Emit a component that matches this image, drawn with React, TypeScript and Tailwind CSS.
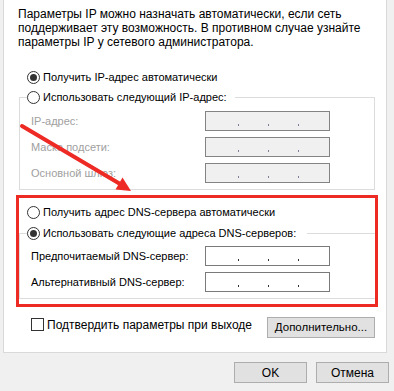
import React from "react";

function Radio({ checked }: { checked?: boolean }) {
  return (
    <span className="w-[13px] h-[13px] rounded-full border border-[#333333] bg-white flex items-center justify-center shrink-0">
      {checked ? <span className="w-[7px] h-[7px] rounded-full bg-[#333333]" /> : null}
    </span>
  );
}

function IpBox({ disabled }: { disabled?: boolean }) {
  const dot = disabled ? "bg-[#7d7d95]" : "bg-[#333333]";
  return (
    <div
      className={`w-[125px] h-[20px] border flex items-end pb-[4px] pl-[32px] ${
        disabled ? "bg-[#f0f0f0] border-[#838383]" : "bg-white border-[#7a7a7a]"
      }`}
    >
      <span className={`w-px h-[2px] ${dot}`} />
      <span className={`w-px h-[2px] ml-[29px] ${dot}`} />
      <span className={`w-px h-[2px] ml-[29px] ${dot}`} />
    </div>
  );
}

function FieldRow({ label, disabled }: { label: string; disabled?: boolean }) {
  return (
    <div className="flex items-center pl-[11px]">
      <span className={`w-[174px] leading-[20px] text-[11px] ${disabled ? "text-[#a0a0a0]" : "text-black"}`}>
        {label}
      </span>
      <IpBox disabled={disabled} />
    </div>
  );
}

export default function App() {
  return (
    <div
      className="w-[394px] h-[391px] bg-[#f0f0f0] relative overflow-hidden text-[12px] text-black"
      style={{ fontFamily: '"Segoe UI", "Liberation Sans", Arial, sans-serif' }}
    >
      <div className="ml-[3px] w-[384px] h-[353px] bg-white border-x border-b border-[#d9d9d9] pl-[15px] pr-[11px]">
        <p className="pt-[7px] -ml-px leading-[14px]">
          Параметры IP можно назначать автоматически, если сеть
          <br />
          поддерживает эту возможность. В противном случае узнайте
          <br />
          параметры IP у сетевого администратора.
        </p>

        <div className="mt-[20px] ml-[8px] h-[16px] flex items-center">
          <Radio checked />
          <span className="ml-[3px] text-[11px]">Получить IP-адрес автоматически</span>
        </div>

        <fieldset className="mt-[4px] border border-[#dcdcdc] pb-[6px]">
          <legend className="ml-[7px] pr-[8px] h-[16px] flex items-center">
            <Radio />
            <span className="ml-[3px] text-[11px]">Использовать следующий IP-адрес:</span>
          </legend>
          <div className="mt-[6px] flex flex-col gap-[6px]">
            <FieldRow label="IP-адрес:" disabled />
            <FieldRow label="Маска подсети:" disabled />
            <FieldRow label="Основной шлюз:" disabled />
          </div>
        </fieldset>

        <div className="mt-[5px] -mx-[3px] border-[3px] border-[#ee2a24] pt-[6px] pb-[5px]">
          <div className="ml-[8px] h-[16px] flex items-center">
            <Radio />
            <span className="ml-[3px] text-[11px]">Получить адрес DNS-сервера автоматически</span>
          </div>
          <fieldset className="mt-[5px] border border-r-0 border-[#dcdcdc] pb-[6px]">
            <legend className="ml-[7px] pr-[11px] h-[16px] flex items-center">
              <Radio checked />
              <span className="ml-[3px] text-[11px]">Использовать следующие адреса DNS-серверов:</span>
            </legend>
            <div className="mt-[5px] flex flex-col gap-[6px]">
              <FieldRow label="Предпочитаемый DNS-сервер:" />
              <FieldRow label="Альтернативный DNS-сервер:" />
            </div>
          </fieldset>
        </div>

        <div className="mt-[10px] flex items-start justify-between">
          <div className="ml-[12px] mt-[1px] flex items-center h-[13px]">
            <span className="w-[13px] h-[13px] border border-[#333333] bg-white shrink-0" />
            <span className="ml-[3px]">Подтвердить параметры при выходе</span>
          </div>
          <button className="w-[108px] h-[21px] bg-[#e1e1e1] border border-[#adadad] flex items-center justify-center text-[11.5px]">
            Дополнительно...
          </button>
        </div>
      </div>

      <div className="mt-[9px] pr-[5px] flex justify-end gap-[9px]">
        <button className="w-[73px] h-[21px] bg-[#e1e1e1] border border-[#adadad] flex items-center justify-center">
          OK
        </button>
        <button className="w-[73px] h-[21px] bg-[#e1e1e1] border border-[#adadad] flex items-center justify-center">
          Отмена
        </button>
      </div>

      <svg className="absolute left-0 top-0 pointer-events-none" width="394" height="391" viewBox="0 0 394 391">
        <line x1="22" y1="126" x2="121" y2="184.5" stroke="#ee2a24" strokeWidth="4" strokeLinecap="round" />
        <polygon points="131,191 115.5,189.5 122.5,177.5" fill="#ee2a24" />
      </svg>
    </div>
  );
}
